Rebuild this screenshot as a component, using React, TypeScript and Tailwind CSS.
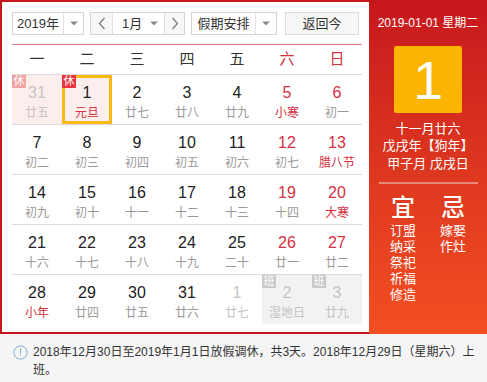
import React from "react";

type Cell = {
  d: string;
  l: string;
  red?: boolean;
  fest?: boolean;
  other?: boolean;
  rest?: "faded" | "on";
  work?: boolean;
  sel?: boolean;
};

const rows: Cell[][] = [
  [
    { d: "31", l: "廿五", other: true, rest: "faded" },
    { d: "1", l: "元旦", fest: true, rest: "on", sel: true },
    { d: "2", l: "廿七" },
    { d: "3", l: "廿八" },
    { d: "4", l: "廿九" },
    { d: "5", l: "小寒", red: true, fest: true },
    { d: "6", l: "初一", red: true },
  ],
  [
    { d: "7", l: "初二" },
    { d: "8", l: "初三" },
    { d: "9", l: "初四" },
    { d: "10", l: "初五" },
    { d: "11", l: "初六" },
    { d: "12", l: "初七", red: true },
    { d: "13", l: "腊八节", red: true, fest: true },
  ],
  [
    { d: "14", l: "初九" },
    { d: "15", l: "初十" },
    { d: "16", l: "十一" },
    { d: "17", l: "十二" },
    { d: "18", l: "十三" },
    { d: "19", l: "十四", red: true },
    { d: "20", l: "大寒", red: true, fest: true },
  ],
  [
    { d: "21", l: "十六" },
    { d: "22", l: "十七" },
    { d: "23", l: "十八" },
    { d: "24", l: "十九" },
    { d: "25", l: "二十" },
    { d: "26", l: "廿一", red: true },
    { d: "27", l: "廿二", red: true },
  ],
  [
    { d: "28", l: "小年", fest: true },
    { d: "29", l: "廿四" },
    { d: "30", l: "廿五" },
    { d: "31", l: "廿六" },
    { d: "1", l: "廿七", other: true },
    { d: "2", l: "湿地日", other: true, work: true },
    { d: "3", l: "廿九", other: true, work: true },
  ],
];

const Caret = () => (
  <svg width="8" height="5" viewBox="0 0 8 5">
    <path d="M0 0.5 L8 0.5 L4 4.5 Z" fill="#8a8a8a" />
  </svg>
);

const Chevron = ({ dir }: { dir: "l" | "r" }) => (
  <svg width="8" height="13" viewBox="0 0 8 13">
    <path
      d={dir === "l" ? "M6.5 1 L1.5 6.5 L6.5 12" : "M1.5 1 L6.5 6.5 L1.5 12"}
      fill="none"
      stroke="#777"
      strokeWidth="1.2"
    />
  </svg>
);

function DayCell({ c }: { c: Cell }) {
  let bg = "";
  if (c.rest) bg = "bg-[#fdeeee]";
  if (c.work) bg = "bg-[#f2f2f2]";
  let numColor = "text-[#222]";
  if (c.red) numColor = "text-[#d6303f]";
  if (c.other) numColor = "text-[#c4c4c4]";
  let lunColor = "text-[#9a9a9a]";
  if (c.fest) lunColor = "text-[#d6303f]";
  if (c.other) lunColor = "text-[#c4c4c4]";
  return (
    <div className={`relative h-[49px] flex flex-col items-center pt-[8px] ${bg}`}>
      {c.sel && <div className="absolute inset-0 border-[3px] border-[#f8bb14]" />}
      {c.rest && (
        <div
          className={`absolute left-0 top-0 w-[14px] h-[13px] flex items-center justify-center text-[11px] leading-none text-white ${
            c.rest === "on" ? "bg-[#e9343f]" : "bg-[#f2a3a3]"
          }`}
        >
          休
        </div>
      )}
      {c.work && (
        <div className="absolute left-0 top-0 w-[14px] h-[13px] flex items-center justify-center text-[11px] leading-none text-white bg-[#c9c9c9]">
          班
        </div>
      )}
      <div className={`text-[16px] leading-[20px] ${numColor}`}>{c.d}</div>
      <div className={`text-[12px] leading-[16px] mt-[2px] ${lunColor}`}>{c.l}</div>
    </div>
  );
}

export default function App() {
  const font = { fontFamily: '"Liberation Sans", "Noto Sans CJK SC", sans-serif' };
  return (
    <div className="w-[487px] h-[382px] bg-white" style={font}>
      <div className="flex h-[334px]">
        {/* calendar */}
        <div className="w-[369px] border-l-2 border-t-2 border-b-2 border-[#c5161d] pl-[10px] pt-[10px]">
          {/* controls */}
          <div className="flex items-center h-[23px] text-[13px] text-[#333]">
            <div className="flex h-full w-[72px] border border-[#d3d3d3] bg-white">
              <div className="w-[50px] flex items-center justify-center whitespace-nowrap">2019年</div>
              <div className="flex-1 border-l border-[#e2e2e2] flex items-center justify-center">
                <Caret />
              </div>
            </div>
            <div className="flex h-full w-[95px] ml-[6px] border border-[#d3d3d3] bg-white">
              <div className="w-[21px] flex items-center justify-center bg-[#f7f7f7]">
                <Chevron dir="l" />
              </div>
              <div className="w-[53px] border-l border-r border-[#e2e2e2] flex items-center justify-between pl-[9px] pr-[6px] whitespace-nowrap">
                <span>1月</span>
                <Caret />
              </div>
              <div className="flex-1 flex items-center justify-center bg-[#f7f7f7]">
                <Chevron dir="r" />
              </div>
            </div>
            <div className="flex h-full w-[86px] ml-[6px] border border-[#d3d3d3] bg-white">
              <div className="w-[63px] flex items-center justify-center whitespace-nowrap">假期安排</div>
              <div className="flex-1 border-l border-[#e2e2e2] flex items-center justify-center">
                <Caret />
              </div>
            </div>
            <div className="flex h-full w-[74px] ml-[8px] border border-[#dcdcdc] bg-[#f7f7f7] items-center justify-center whitespace-nowrap">
              返回今
            </div>
          </div>
          {/* grid */}
          <div className="w-[350px] mt-[9px]">
            <div className="grid grid-cols-7 h-[30px] border-t border-[#e07b86] items-center text-[15px]">
              {["一", "二", "三", "四", "五", "六", "日"].map((w, i) => (
                <div
                  key={w}
                  className={`text-center ${i >= 5 ? "text-[#d6303f]" : "text-[#333]"}`}
                >
                  {w}
                </div>
              ))}
            </div>
            {rows.map((r, ri) => (
              <div key={ri} className="grid grid-cols-7 border-t border-[#dadada]">
                {r.map((c, ci) => (
                  <DayCell key={ci} c={c} />
                ))}
              </div>
            ))}
          </div>
        </div>
        {/* right panel */}
        <div className="w-[118px] h-full bg-linear-to-b from-[#c6161d] to-[#f34f22] flex flex-col items-center text-white">
          <div className="mt-[15px] text-[12px] leading-[16px] whitespace-nowrap">2019-01-01 星期二</div>
          <div className="mt-[15px] w-[68px] h-[67px] rounded-[2px] bg-[#fbb400] flex items-center justify-center text-[54px] leading-none">
            1
          </div>
          <div className="mt-[7px] text-[13px] leading-[17px]">十一月廿六</div>
          <div className="text-[13px] leading-[18px]">戊戌年【狗年】</div>
          <div className="text-[13px] leading-[18px]">甲子月 戊戌日</div>
          <div className="mt-[9px] w-[99px] h-[2px] bg-white/40" />
          <div className="flex mt-[10px] w-[100px]">
            <div className="w-[50px] flex flex-col items-center">
              <div className="text-[24px] leading-[28px] font-medium">宜</div>
              <div className="mt-[1px] text-[13px] leading-[16px] flex flex-col items-center">
                <span>订盟</span>
                <span>纳采</span>
                <span>祭祀</span>
                <span>祈福</span>
                <span>修造</span>
              </div>
            </div>
            <div className="w-[50px] flex flex-col items-center">
              <div className="text-[24px] leading-[28px] font-medium">忌</div>
              <div className="mt-[1px] text-[13px] leading-[16px] flex flex-col items-center">
                <span>嫁娶</span>
                <span>作灶</span>
              </div>
            </div>
          </div>
        </div>
      </div>
      {/* info */}
      <div className="h-[48px] bg-[#f5f5f5] flex pl-[13px] pt-[9px] text-[12px] leading-[18px] text-[#333]">
        <svg width="15" height="15" viewBox="0 0 15 15" className="mt-[2px] shrink-0">
          <circle cx="7.5" cy="7.5" r="6.6" fill="none" stroke="#7eaedb" strokeWidth="1" />
          <rect x="7" y="3.5" width="1" height="5" fill="#7eaedb" />
          <rect x="7" y="9.8" width="1" height="1.3" fill="#7eaedb" />
        </svg>
        <div className="ml-[5px]">
          <div className="whitespace-nowrap">
            2018年12月30日至2019年1月1日放假调休，共3天。2018年12月29日（星期六）上
          </div>
          <div>班。</div>
        </div>
      </div>
    </div>
  );
}
